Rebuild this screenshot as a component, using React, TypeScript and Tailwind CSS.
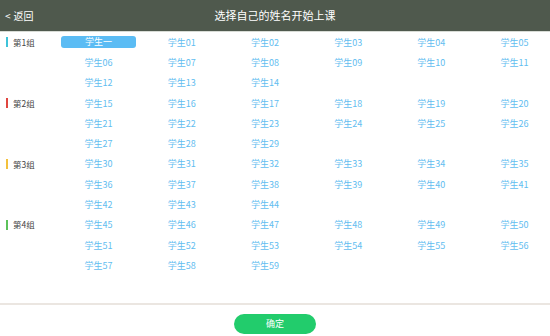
import React, { useState } from "react";

type Group = { name: string; color: string; students: string[] };

const num = (n: number) => `学生${String(n).padStart(2, "0")}`;
const range = (a: number, b: number) =>
  Array.from({ length: b - a + 1 }, (_, i) => num(a + i));

const groups: Group[] = [
  { name: "第1组", color: "bg-[#3ec3d9]", students: ["学生一", ...range(1, 14)] },
  { name: "第2组", color: "bg-[#e0463f]", students: range(15, 29) },
  { name: "第3组", color: "bg-[#f3c13c]", students: range(30, 44) },
  { name: "第4组", color: "bg-[#5cc25a]", students: range(45, 59) },
];

function GroupBlock({
  group,
  selected,
  onPick,
}: {
  group: Group;
  selected: string;
  onPick: (s: string) => void;
}) {
  return (
    <div className="flex">
      <div className="w-[57px] shrink-0 flex items-start pl-[6px]">
        <div className="flex items-center h-[20.3px] gap-[5px]">
          <span className={`w-[2px] h-[10px] ${group.color}`} />
          <span className="text-[8.5px] text-[#444]">{group.name}</span>
        </div>
      </div>
      <div className="grid grid-cols-[repeat(6,83.2px)] auto-rows-[20.3px]">
        {group.students.map((s) => (
          <div key={s} className="flex items-center justify-center px-[4px]">
            {s === selected ? (
              <div className="w-full h-[12px] rounded-[3px] bg-[#5bbcf4] text-white text-[9px] leading-[12px] text-center">
                {s}
              </div>
            ) : (
              <button
                type="button"
                onClick={() => onPick(s)}
                className="text-[9px] text-[#62bdf0] leading-none"
              >
                {s}
              </button>
            )}
          </div>
        ))}
      </div>
    </div>
  );
}

export default function App() {
  const [selected, setSelected] = useState("学生一");

  return (
    <div
      className="w-[550px] h-[336px] overflow-hidden bg-white flex flex-col"
      style={{ fontFamily: '"Noto Sans CJK SC", "Noto Sans", sans-serif' }}
    >
      <div className="h-[31px] shrink-0 bg-[#4f594d] relative flex items-center justify-center">
        <div className="absolute left-[5px] top-0 h-full flex items-center text-[10px] text-white gap-[3px]">
          <span>&lt;</span>
          <span>返回</span>
        </div>
        <div className="text-[11px] text-white">选择自己的姓名开始上课</div>
      </div>
      <div className="h-px bg-[#d8dcd6]" />

      <div className="flex-1 flex flex-col">
        {groups.map((g) => (
          <GroupBlock key={g.name} group={g} selected={selected} onPick={setSelected} />
        ))}
      </div>

      <div className="h-[2px] bg-[#ebe6e1]" />
      <div className="h-[31px] shrink-0 flex items-start justify-center pt-[9px]">
        <button
          type="button"
          className="w-[82px] h-[20px] rounded-full bg-[#22cc6c] text-white text-[9px]"
        >
          确定
        </button>
      </div>
    </div>
  );
}
